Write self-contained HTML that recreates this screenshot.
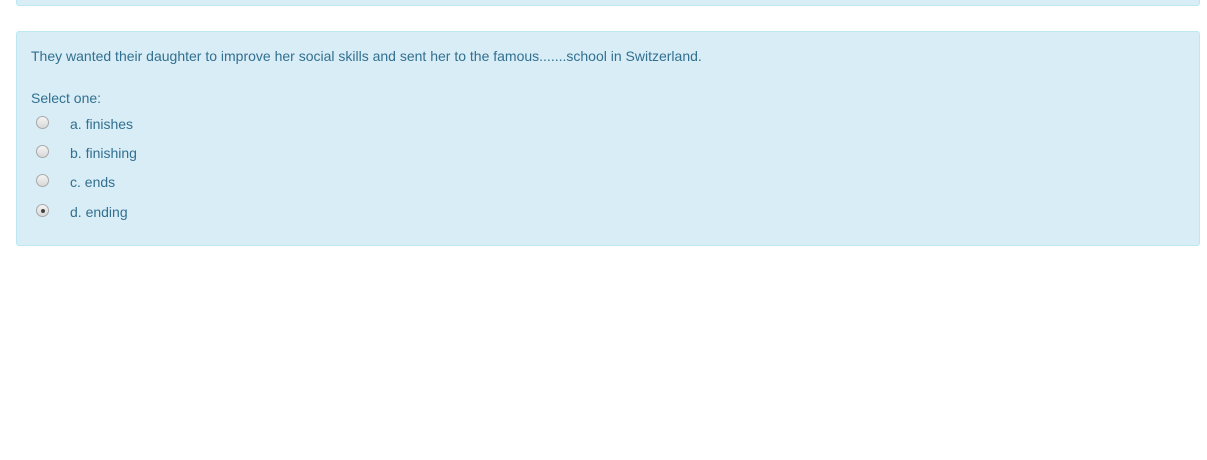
<!DOCTYPE html><html><head><style>
body{margin:0;background:#fff;font-family:"Liberation Sans",Arial,sans-serif;font-size:14px;color:#31708f;width:1207px;height:460px;overflow:hidden;position:relative}
.box{position:absolute;left:16px;width:1182px;background:#d9edf7;border:1px solid #bce8f1;border-radius:3px}
.t{position:absolute;white-space:nowrap}
.r{position:absolute;left:36px;width:13px;height:13px;border-radius:50%;border:1px solid #a8a8a8;background:linear-gradient(#f4f4f4,#d8d8d8);box-sizing:border-box}
.r.on::after{content:"";position:absolute;left:3.5px;top:3.5px;width:4px;height:4px;border-radius:50%;background:#444}
</style></head><body>
<div class="box" style="top:-5px;height:9px"></div>
<div class="box" style="top:31px;height:213px"></div>
<div class="t" style="left:31px;top:48px">They wanted their daughter to improve her social skills and sent her to the famous.......school in Switzerland.</div>
<div class="t" style="left:31px;top:90px">Select one:</div>
<div class="r" style="top:116px"></div><div class="t" style="left:70px;top:116px">a. finishes</div>
<div class="r" style="top:145px"></div><div class="t" style="left:70px;top:145px">b. finishing</div>
<div class="r" style="top:174px"></div><div class="t" style="left:70px;top:174px">c. ends</div>
<div class="r on" style="top:204px"></div><div class="t" style="left:70px;top:204px">d. ending</div>
</body></html>
